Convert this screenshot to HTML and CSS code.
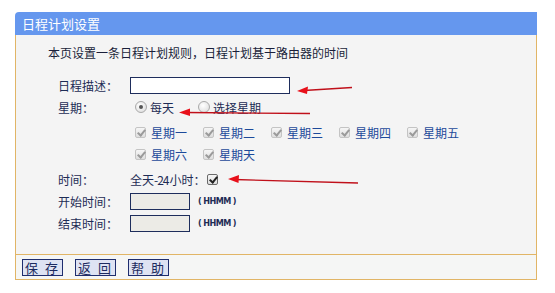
FILE: index.html
```html
<!DOCTYPE html>
<html lang="zh-CN">
<head>
    <meta charset="UTF-8">
    <title>日程计划设置</title>
    <link rel="stylesheet" href="styles.css">
</head>
<body>
    <div class="panel">
        <div class="panel-title">日程计划设置</div>
        <div class="panel-body">
            <p class="intro">本页设置一条日程计划规则，日程计划基于路由器的时间</p>
            <div class="form">
                <div class="label row">日程描述：</div>
                <div class="value row"><input type="text" class="text-input"></div>

                <div class="label row">星期：</div>
                <div class="value row">
                    <span class="radio on"></span><span class="opt">每天</span>
                    <span class="radio"></span><span class="opt">选择星期</span>
                </div>

                <div class="label"></div>
                <div class="value days">
                    <span class="day"><span class="check dim"></span>星期一</span>
                    <span class="day"><span class="check dim"></span>星期二</span>
                    <span class="day"><span class="check dim"></span>星期三</span>
                    <span class="day"><span class="check dim"></span>星期四</span>
                    <span class="day"><span class="check dim"></span>星期五</span>
                    <span class="day"><span class="check dim"></span>星期六</span>
                    <span class="day"><span class="check dim"></span>星期天</span>
                </div>

                <div class="label row time-row">时间：</div>
                <div class="value row time-row">全天<span class="digits">-24</span>小时<span class="colon">：</span><span class="check dark"></span></div>

                <div class="label row">开始时间：</div>
                <div class="value row"><input type="text" class="time-input" disabled><span class="hint">( HHMM )</span></div>

                <div class="label row">结束时间：</div>
                <div class="value row"><input type="text" class="time-input" disabled><span class="hint">( HHMM )</span></div>
            </div>
        </div>
        <div class="panel-foot">
            <button type="button" class="btn">保 存</button>
            <button type="button" class="btn">返 回</button>
            <button type="button" class="btn">帮 助</button>
        </div>
    </div>

    <!-- annotation arrows drawn over the screenshot -->
    <svg class="marks" width="555" height="293" viewBox="0 0 555 293">
        <g stroke="#c0101a" stroke-width="1.3" fill="#e8101a">
            <line x1="352" y1="87.5" x2="304" y2="90.5"/>
            <polygon stroke="none" points="297,91 308,86.5 307,94"/>
            <line x1="310" y1="113.5" x2="186" y2="112.5"/>
            <polygon stroke="none" points="179,112.5 190,108.5 190,116"/>
            <line x1="358" y1="183" x2="234" y2="179.5"/>
            <polygon stroke="none" points="228,179 239,175 238.5,183"/>
        </g>
    </svg>
</body>
</html>
```

FILE: styles.css
```css
body {
    margin: 0;
    background: #ffffff;
    font-family: "Noto Sans CJK SC", "DejaVu Sans", sans-serif;
    font-size: 12px;
    color: #1c2848;
}
.panel {
    width: 522px;
    margin: 12px 0 0 15px;
}
.panel-title {
    height: 23px;
    line-height: 23px;
    padding-left: 7px;
    background: #6597ee;
    color: #ffffff;
    font-size: 13px;
    border-top-left-radius: 4px;
}
.panel-body {
    background: #f4f4f4;
    border-left: 1px solid #e1b566;
    border-right: 1px solid #e1b566;
    padding: 8px 0 20px 0;
}
.intro {
    margin: 0 0 11px 32px;
    line-height: 20px;
    color: #1a1f3a;
}
.form {
    display: grid;
    grid-template-columns: 72px 1fr;
    padding-left: 42px;
}
.row {
    height: 22px;
    display: flex;
    align-items: center;
}
.label {
    color: #1e2c55;
}
.value {
    color: #1e2c55;
}
.time-row {
    margin-top: 3px;
}
.digits {
    letter-spacing: -1px;
    margin-right: 1px;
}
.colon {
    width: 12px;
    text-align: right;
}
.text-input {
    box-sizing: border-box;
    width: 160px;
    height: 17px;
    margin: 0;
    border: 1px solid #1e2d5c;
    background: #ffffff;
    padding: 0;
}
.time-input {
    box-sizing: border-box;
    width: 60px;
    height: 17px;
    margin: 0;
    border: 1px solid #1e2d5c;
    background: #ecebe6;
    padding: 0;
}
.hint {
    margin-left: 8px;
    font-family: "DejaVu Sans", sans-serif;
    font-stretch: condensed;
    font-weight: bold;
    font-size: 9px;
    letter-spacing: -0.6px;
    color: #1e2c55;
}
.radio {
    box-sizing: border-box;
    width: 12px;
    height: 12px;
    border-radius: 50%;
    border: 1px solid #a9a9a9;
    background: radial-gradient(circle at 40% 35%, #ffffff, #d9d9d9);
    margin: 0 3px 0 5px;
    position: relative;
}
.radio.on::after {
    content: "";
    position: absolute;
    left: 3px;
    top: 3px;
    width: 4px;
    height: 4px;
    border-radius: 50%;
    background: #555555;
}
.opt {
    margin-right: 19px;
}
.days {
    margin-top: 3px;
    display: flex;
    flex-wrap: wrap;
}
.day {
    width: 68px;
    height: 22px;
    display: flex;
    align-items: center;
    color: #1d4a9a;
}
.check {
    box-sizing: border-box;
    width: 11px;
    height: 11px;
    border: 1px solid #c4c4c4;
    border-radius: 2px;
    background: linear-gradient(#f6f6f6, #dedede);
    margin: 0 5px 0 5px;
    position: relative;
}
.check::after {
    content: "";
    position: absolute;
    left: 3px;
    top: 0px;
    width: 3px;
    height: 6px;
    border: solid #9a9a9a;
    border-width: 0 2px 2px 0;
    transform: rotate(40deg);
}
.check.dark {
    border-color: #6a6a6a;
    margin-left: 1px;
}
.check.dark::after {
    border-color: #222222;
}
.panel-foot {
    border: 1px solid #e1b566;
    background: #f5f6f5;
    height: 24px;
    display: flex;
    align-items: center;
    gap: 12px;
    padding-left: 6px;
}
.btn {
    box-sizing: border-box;
    width: 41px;
    height: 17px;
    margin: 0;
    padding: 0;
    border: 1px solid #1e2d6e;
    background: #dee3f3;
    color: #1c2a60;
    font-family: "Noto Sans CJK SC", sans-serif;
    font-size: 13px;
    line-height: 15px;
    letter-spacing: 2px;
}
.marks {
    position: absolute;
    left: 0;
    top: 0;
    pointer-events: none;
}
```
